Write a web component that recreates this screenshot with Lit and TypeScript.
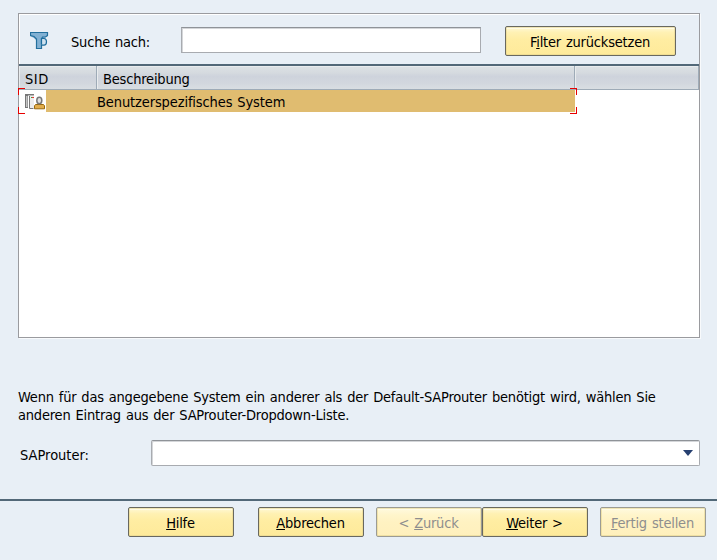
import { LitElement, html, css } from "lit";
import { customElement, property } from "lit/decorators.js";

@customElement("push-button")
class PushButton extends LitElement {
  @property() before = "";
  @property() key = "";
  @property() after = "";
  @property({ type: Boolean, reflect: true }) disabled = false;

  static styles = css`
    :host { display: block; width: 106px; height: 30px; flex: none; }
    button {
      box-sizing: border-box; width: 100%; height: 100%; padding: 2px 1px 0 0;
      border: 1px solid #686860; border-radius: 2px;
      background: linear-gradient(#fff9d8 0, #fff1b3 20%, #ffeda2 45%, #feea9a 100%);
      box-shadow: inset 0 0 0 1px #e3d28a88, inset 0 2px 0 #fffbe4;
      font: inherit; letter-spacing: inherit; word-spacing: inherit; color: #000; white-space: pre;
      display: flex; align-items: center; justify-content: center;
    }
    .text { line-height: 18px; }
    u { text-decoration: underline 1px; text-underline-offset: 1px; text-decoration-skip-ink: none; }
    :host([disabled]) button {
      color: #8e8e8e; border-color: #9b9b94;
      background: linear-gradient(#fffae0 0, #fff5cb 25%, #fff2c2 50%, #fff0bc 100%);
    }
  `;
  render() {
    return html`<button ?disabled=${this.disabled}><span class="text">${this.before}<u>${this.key}</u>${this.after}</span></button>`;
  }
}

@customElement("app-root")
class AppRoot extends LitElement {
  static styles = css`
    :host {
      display: flex; flex-direction: column; box-sizing: border-box; width: 717px; height: 560px;
      padding-top: 13px; background: #e8eff6; color: #000; overflow: hidden;
      font: 14.5px/18px "DejaVu Sans Condensed", "Noto Sans", sans-serif; letter-spacing: -0.2px; word-spacing: 1px;
    }
    .panel {
      box-sizing: border-box; width: 682px; height: 325px; margin-left: 18px; flex: none;
      border: 1px solid #9a9b9f; background: #fff; box-shadow: 1px 1px 0 #f8fafc;
      display: flex; flex-direction: column;
    }
    .search {
      height: 50px; flex: none; box-sizing: border-box; background: #e8eff6; display: flex; align-items: flex-start;
      box-shadow: inset 1px 1px 0 #fff;
    }
    .search svg { margin: 17px 0 0 11px; width: 20px; height: 20px; flex: none; }
    .search .label { margin: 19px 0 0 21px; width: 110px; }
    .field {
      box-sizing: border-box; height: 26px; background: #fff; border: 1px solid #a8abb0;
      border-top-color: #8f9398; box-shadow: inset 1px 1px 0 #d4d6d9;
    }
    .search .field { width: 300px; margin-top: 13px; }
    .search push-button { width: 171px; margin: 12px 0 0 24px; }
    .head {
      height: 26px; flex: none; box-sizing: border-box; border-top: 2px solid #526878; border-bottom: 1px solid #9eabb7;
      background: linear-gradient(#dde2e5 0, #d5dadf 30%, #ced3dc 45%, #d2d7de 75%, #d9dee2 100%);
      display: flex;
    }
    .head div { box-sizing: border-box; border-right: 1px solid #9eabb7; padding: 4px 0 0 6px; box-shadow: inset 1px 1px 0 #e9ecee; }
    .c1 { width: 78px; letter-spacing: 0.5px; } .c2 { width: 478px; } .c3 { width: 124px; }
    .row { position: relative; display: flex; height: 22px; width: 556px; }
    .row svg { width: 27px; height: 22px; flex: none; }
    .row .name { flex: 1; background: #e0bc70; padding: 3px 0 0 51px; letter-spacing: -0.12px; }
    .mark { position: absolute; width: 7px; height: 7px; border: 0 solid #e80000; box-sizing: border-box; }
    .tl { left: -1px; top: -2px; border-width: 1px 0 0 1px; }
    .tr { right: -2px; top: -2px; border-width: 1px 1px 0 0; }
    .bl { left: -1px; bottom: -2px; border-width: 0 0 1px 1px; }
    .br { right: -2px; bottom: -2px; border-width: 0 1px 1px 0; }
    .note { margin: 50px 0 0 18px; white-space: nowrap; }
    .router { display: flex; margin: 16px 0 0 20px; }
    .router .label { width: 131px; padding-top: 6px; letter-spacing: 0; }
    .select { width: 549px; border-radius: 2px; display: flex; justify-content: flex-end; padding: 9px 6px 0 0; }
    .select svg { width: 10px; height: 6px; }
    .foot { margin-top: 33px; border-top: 2px solid #526878; padding: 6px 0 0 128px; display: flex; }
    .g24 { margin-left: 24px; } .g12 { margin-left: 12px; }
  `;
  render() {
    return html`
      <div class="panel">
        <div class="search">
          <svg viewBox="0 0 20 20">
            <path d="M0 1h18v4l-4 2-2 2v9H6V9L4 7 0 5z" fill="#82b1d3"/>
            <path d="M.5 1.500h17v3l-2 1.500h-3L11.500 8v9.500h-5V8L4 5.500 .5 4.500z" fill="none" stroke="#236f9d" stroke-width="1.2"/>
            <path d="M11.500 13.500V7.500h2.500q2.500 0 2.500 3.300t-2.500 3.300h-2.500" fill="#cfe1ee" stroke="#1c6c9c" stroke-width="1.2"/>
          </svg>
          <span class="label">Suche nach:</span>
          <div class="field"></div>
          <push-button before="F" key="i" after="lter zurücksetzen"></push-button>
        </div>
        <div class="head">
          <div class="c1">SID</div><div class="c2">Beschreibung</div><div class="c3"></div>
        </div>
        <div class="row">
          <svg viewBox="0 0 27 22">
            <path d="M6 4h9v1.500H9V18H6z" fill="#777"/>
            <path d="M7 6h1.500v11H7z" fill="#c4c4c4"/>
            <path d="M10 6h5v12h-5z" fill="#ececec"/>
            <path d="M10.500 6v12.500h4" fill="none" stroke="#777"/>
            <path d="M13 7h2v1h-2z" fill="#e33"/><path d="M12 7h1v1h-1z" fill="#3a3"/>
            <path d="M15.500 18.800v-3l1-1.300h8l1 1.300v3z" fill="#e2ad4c" stroke="#98680e"/>
            <ellipse cx="20.300" cy="10.500" rx="2.500" ry="3.200" fill="#e0e0e0" stroke="#777" stroke-width="1.5"/>
          </svg>
          <div class="name">Benutzerspezifisches System</div>
          <i class="mark tl"></i><i class="mark tr"></i><i class="mark bl"></i><i class="mark br"></i>
        </div>
      </div>
      <div class="note">
        Wenn für das angegebene System ein anderer als der Default-SAProuter benötigt wird, wählen Sie<br>
        anderen Eintrag aus der SAProuter-Dropdown-Liste.
      </div>
      <div class="router">
        <span class="label">SAProuter:</span>
        <div class="field select"><svg viewBox="0 0 10 6"><path d="M0 0h10L5 6z" fill="#263f70"/></svg></div>
      </div>
      <div class="foot">
        <push-button key="H" after="ilfe"></push-button>
        <push-button class="g24" key="A" after="bbrechen"></push-button>
        <push-button class="g12" disabled before="< " key="Z" after="urück"></push-button>
        <push-button key="W" after="eiter >"></push-button>
        <push-button class="g12" disabled key="F" after="ertig stellen"></push-button>
      </div>`;
  }
}
